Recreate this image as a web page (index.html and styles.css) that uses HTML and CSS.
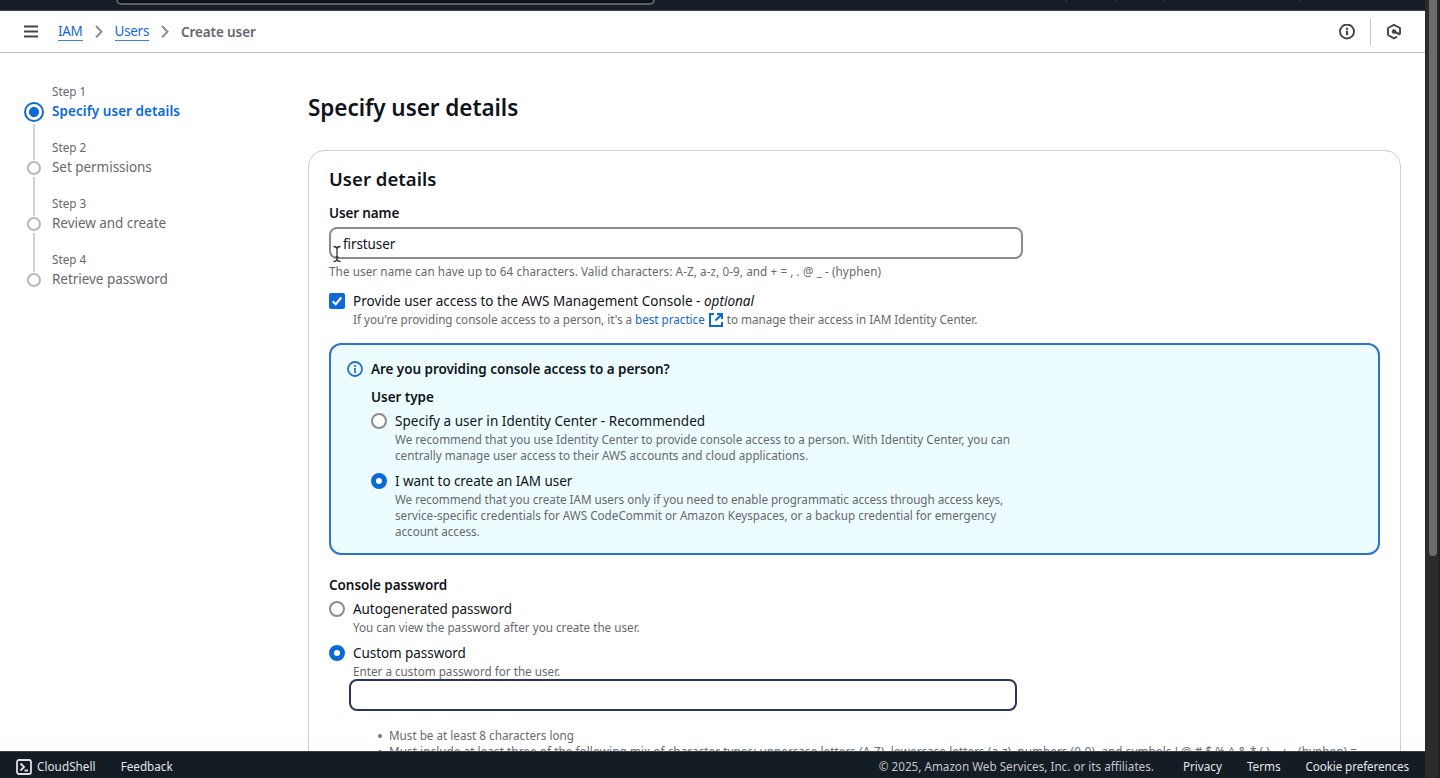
FILE: index.html
```
<!DOCTYPE html>
<html lang="en">
<head>
<meta charset="utf-8">
<title>Create user | IAM</title>
<link rel="stylesheet" href="styles.css">
</head>
<body>
<div class="window">
  <div class="app">
    <header class="topbar">
      <div class="topbar-search"></div>
      <div class="topbar-ticks"><i></i><i></i><i></i><i></i></div>
    </header>

    <nav class="crumbs">
      <svg class="menu-icon" width="16" height="16" viewBox="0 0 16 16"><path d="M1 2.500h14M1 7.500h14M1 12.500h14" fill="none" stroke="#424650" stroke-width="1.800"/></svg>
      <a class="crumb-link">IAM</a>
      <svg class="chevron" width="16" height="16" viewBox="0 0 16 16"><path d="M5 2l5.500 5.700L5 13.400" fill="none" stroke="#8c8c8f" stroke-width="2"/></svg>
      <a class="crumb-link users">Users</a>
      <svg class="chevron" width="16" height="16" viewBox="0 0 16 16"><path d="M5 2l5.500 5.700L5 13.400" fill="none" stroke="#8c8c8f" stroke-width="2"/></svg>
      <span class="crumb-current">Create user</span>
      <div class="crumb-tools">
        <svg width="16" height="16" viewBox="0 0 16 16"><circle cx="8" cy="7.500" r="7" fill="none" stroke="#424650" stroke-width="1.900"/><path d="M8 3.700v2M8 6.700v4.500" stroke="#424650" stroke-width="2.200"/></svg>
        <span class="tool-divider"></span>
        <svg width="16" height="16" viewBox="0 0 16 16"><path d="M14 10.400V4L8 .900 2 4v7L8 14.300l3-1.600" fill="none" stroke="#424650" stroke-width="1.900" stroke-linejoin="round"/><circle cx="8" cy="7.500" r="2.200" fill="#424650"/><path d="M8 7.500l6 3" stroke="#424650" stroke-width="2"/></svg>
      </div>
    </nav>

    <div class="content">
      <ol class="steps">
        <li class="step active"><span class="rail"><i class="dot"></i><i class="line"></i></span><div><div class="step-no">Step 1</div><div class="step-name">Specify user details</div></div></li>
        <li class="step"><span class="rail"><i class="dot"></i><i class="line"></i></span><div><div class="step-no">Step 2</div><div class="step-name">Set permissions</div></div></li>
        <li class="step"><span class="rail"><i class="dot"></i><i class="line"></i></span><div><div class="step-no">Step 3</div><div class="step-name">Review and create</div></div></li>
        <li class="step"><span class="rail"><i class="dot"></i></span><div><div class="step-no">Step 4</div><div class="step-name">Retrieve password</div></div></li>
      </ol>

      <main class="main">
        <h1>Specify user details</h1>
        <section class="card">
          <h2>User details</h2>
          <div class="label username-label">User name</div>
          <div class="field-wrap">
            <input class="field" type="text" value="firstuser">
            <svg class="ibeam" width="10" height="18" viewBox="0 0 10 18"><path d="M1.500 1.500Q4.500 1.500 5 3.500Q5.500 1.500 8.500 1.500M5 3.500V14.500M1.500 16.500Q4.500 16.500 5 14.500Q5.500 16.500 8.500 16.500M3.500 12H6.500" fill="none" stroke="#333" stroke-width="1.300"/></svg>
          </div>
          <div class="hint username-hint">The user name can have up to 64 characters. Valid characters: A-Z, a-z, 0-9, and + = , . @ _ - (hyphen)</div>

          <div class="option access">
            <svg class="control" width="16" height="16" viewBox="0 0 16 16"><rect width="16" height="16" rx="2" fill="#0b69d8"/><path d="M3.700 8.200l3 3 5.600-6.700" fill="none" stroke="#fff" stroke-width="2"/></svg>
            <div>
              <div class="option-name">Provide user access to the AWS Management Console - <em>optional</em></div>
              <div class="hint access-hint">If you're providing console access to a person, it's a <a class="link">best practice <svg class="ext" width="16" height="16" viewBox="0 0 16 16"><path d="M6 2H2v12h12v-4M9 2h5v5M14 2L7.500 8.500" fill="none" stroke="#0b69d8" stroke-width="2"/></svg></a> to manage their access in IAM Identity Center.</div>
            </div>
          </div>

          <div class="alert">
            <svg class="alert-icon" width="16" height="16" viewBox="0 0 16 16"><circle cx="8" cy="8" r="7" fill="none" stroke="#1f70d0" stroke-width="1.800"/><path d="M8 4v2M8 7v5" stroke="#1f70d0" stroke-width="1.700"/></svg>
            <div class="alert-body">
              <div class="label">Are you providing console access to a person?</div>
              <div class="label type-label">User type</div>
              <div class="option">
                <i class="control radio"></i>
                <div>
                  <div class="option-name roomy">Specify a user in Identity Center - Recommended</div>
                  <div class="hint">We recommend that you use Identity Center to provide console access to a person. With Identity Center, you can<br>centrally manage user access to their AWS accounts and cloud applications.</div>
                </div>
              </div>
              <div class="option second">
                <i class="control radio on"></i>
                <div>
                  <div class="option-name tight">I want to create an IAM user</div>
                  <div class="hint"><span class="snug">We recommend that you create IAM users only if you need to enable programmatic access through access keys,</span><br>service-specific credentials for AWS CodeCommit or Amazon Keyspaces, or a backup credential for emergency<br><span class="snug">account access.</span></div>
                </div>
              </div>
            </div>
          </div>

          <div class="label password-label">Console password</div>
          <div class="option">
            <i class="control radio"></i>
            <div>
              <div class="option-name tight">Autogenerated password</div>
              <div class="hint">You can view the password after you create the user.</div>
            </div>
          </div>
          <div class="option second">
            <i class="control radio on"></i>
            <div>
              <div class="option-name tight">Custom password</div>
              <div class="hint">Enter a custom password for the user.</div>
            </div>
          </div>
          <input class="field password" type="password">
          <ul class="rules">
            <li>Must be at least 8 characters long</li>
            <li class="mix">Must include at least three of the following mix of character types: uppercase letters (A-Z), lowercase letters (a-z), numbers (0-9), and symbols ! @ # $ % ^ &amp; * ( ) _ + - (hyphen) =</li>
          </ul>
        </section>
      </main>
    </div>

    <footer class="footer">
      <svg width="16" height="16" viewBox="0 0 16 16"><rect x="1" y="1" width="14" height="14" rx="2" fill="none" stroke="#dedee3" stroke-width="1.800"/><path d="M4.500 4.500l3.500 3.500-3.500 3.500M8.500 11.500h3.500" fill="none" stroke="#dedee3" stroke-width="1.900"/></svg>
      <span class="shell">CloudShell</span>
      <span class="feedback">Feedback</span>
      <span class="legal">© 2025, Amazon Web Services, Inc. or its affiliates.</span>
      <span class="privacy">Privacy</span>
      <span class="terms">Terms</span>
      <span class="cookies">Cookie preferences</span>
    </footer>
  </div>
  <div class="scrollbar"><div class="thumb"></div></div>
</div>
</body>
</html>
```
FILE: styles.css
```
* { box-sizing: border-box; }
body { margin: 0; overflow: hidden; font-family: "Noto Sans", sans-serif; color: #0f141a; }
h1, h2, ol, ul { margin: 0; padding: 0; }
ol, ul { list-style: none; }
svg { display: block; flex: none; }

.window { display: flex; width: 1440px; height: 778px; background: #2b2b2b; }
.app { display: flex; flex-direction: column; width: 1425px; height: 778px; background: #fff; }

.topbar { flex: none; display: flex; height: 11px; padding-left: 116px; background: #161d26; border-bottom: 1px solid #41464d; }
.topbar-search { width: 539px; height: 5px; background: #0f1214; border: 2px solid #5b6066; border-top: 0; border-radius: 0 0 6px 6px; }
.topbar-ticks { display: flex; padding-left: 411px; }
.topbar-ticks i { width: 1px; height: 2px; margin-right: 48px; background: #3a4048; }
.topbar-ticks i:nth-child(3) { margin-right: 135px; }

.crumbs { flex: none; display: flex; align-items: center; height: 42px; padding: 0 23px; border-bottom: 1px solid #bdbdc0; font-size: 13.5px; line-height: 20px; }
.crumb-link { margin-left: 19px; padding-top: 1px; color: #1268d3; border-bottom: 1px solid #3b82dc; line-height: 17px; letter-spacing: -.3px; }
.crumb-link.users { margin-left: 8px; }
.chevron { margin-left: 8px; }
.crumb-current { margin-left: 8px; color: #656769; font-weight: 600; letter-spacing: -.12px; }
.crumb-tools { display: flex; align-items: center; margin-left: auto; }
.tool-divider { width: 1px; height: 26px; margin: 0 15px; background: #c6c6cd; }

.content { flex: 1; display: flex; min-height: 0; overflow: hidden; }
.steps { width: 308px; flex: none; padding: 30px 0 0 24px; }
.step { display: flex; height: 56px; color: #67696c; }
.rail { display: flex; flex-direction: column; align-items: center; width: 20px; margin-right: 8px; padding-top: 22px; }
.dot { flex: none; width: 14px; height: 14px; border: 2px solid #b8b8ba; border-radius: 50%; }
.line { flex: none; width: 2px; height: 39px; margin: 2px 0 -24px; background: #d2d2d4; }
.active .rail { padding-top: 19px; }
.active .dot { width: 20px; height: 20px; border-color: #1268d3; background: radial-gradient(circle, #0b69d8 4.700px, #fff 5.300px); }
.active .line { height: 36px; }
.step-no { font-size: 11.7px; line-height: 16px; }
.step-name { margin-top: 2px; font-size: 13.5px; line-height: 20px; letter-spacing: -.04px; }
.active .step-name { color: #0b69d8; font-weight: 600; letter-spacing: .06px; }

.main { width: 1093px; padding-top: 40px; }
h1 { font-size: 22.5px; line-height: 30px; font-weight: 600; letter-spacing: -.06px; }
.card { height: 900px; margin-top: 27px; padding: 16px 20px; border: 1px solid #cfcfd2; border-radius: 16px; white-space: nowrap; }
h2 { font-size: 18.5px; line-height: 24px; font-weight: 600; letter-spacing: .04px; }
.label { font-size: 13.5px; line-height: 20px; font-weight: 600; letter-spacing: -.05px; }
.username-label { margin-top: 12px; letter-spacing: -.13px; }
.field-wrap { position: relative; height: 32px; margin-top: 4px; }
.field { display: block; width: 694px; height: 32px; padding: 1px 12px 0; border: 2px solid #8c8c90; border-radius: 8px; background: #fff; color: #0f141a; font: 13.5px "Noto Sans", sans-serif; letter-spacing: -.1px; outline: 0; }
.ibeam { position: absolute; left: 3px; top: 18px; }
.hint { font-size: 11.7px; line-height: 16px; color: #67696c; }
.snug { letter-spacing: -.04px; }
.username-hint { margin-top: 4px; letter-spacing: .08px; }
.option { display: flex; gap: 8px; }
.control { flex: none; margin-top: 2px; }
.radio { width: 16px; height: 16px; border: 2px solid #8c8c90; border-radius: 50%; background: #fff; }
.radio.on { border: 5px solid #0b69d8; }
.option-name { font-size: 13.5px; line-height: 20px; margin-bottom: -2px; letter-spacing: .01px; }
.option .hint { padding-top: 2px; }
.roomy { letter-spacing: .03px; }
.tight { letter-spacing: -.06px; }
.access { height: 36px; margin-top: 12px; }
.access-hint { letter-spacing: -.025px; }
.link { color: #1268d3; }
.ext { display: inline-block; vertical-align: -2px; margin: -4px 0 -2px; }

.alert { display: flex; gap: 8px; width: 1051px; height: 212px; margin-top: 16px; padding: 14px 16px; background: #edfcfe; border: 2px solid #2c74cf; border-radius: 12px; }
.alert-icon { margin-top: 2px; }
.type-label { margin-top: 8px; }
.alert .option { margin-top: 4px; }
.alert .option.second { margin-top: 8px; }

.password-label { margin-top: 20px; margin-bottom: 4px; }
.option.second { margin-top: 8px; }
.field.password { width: 668px; margin: 0 0 0 20px; border-color: #2a3558; }
.rules { margin-top: 16px; padding-left: 60px; font-size: 11.7px; line-height: 16px; color: #67696c; }
.rules li { position: relative; }
.rules li::before { content: ""; position: absolute; left: -11px; top: 7px; width: 4px; height: 4px; border-radius: 50%; background: #72757d; }
.mix { letter-spacing: .075px; }

.footer { flex: none; display: flex; align-items: center; height: 27px; padding: 4px 16px 0; background: #141c24; color: #e4e6ea; font-size: 11.7px; line-height: 16px; border-top: 1px solid #3a4047; white-space: nowrap; }
.footer span { margin-top: -2px; }
.footer .shell { margin-left: 5px; letter-spacing: .05px; }
.footer .feedback { margin-left: 25px; }
.footer .legal { margin-left: auto; color: #c4c7cc; }
.footer .privacy { margin-left: 29px; }
.footer .terms { margin-left: 25px; }
.footer .cookies { margin-left: 25px; letter-spacing: -.12px; }

.scrollbar { width: 15px; padding-left: 4px; border-right: 2px solid #222; }
.thumb { width: 8px; height: 556px; background: #6b6b6b; border-radius: 0 0 4px 4px; }
```
